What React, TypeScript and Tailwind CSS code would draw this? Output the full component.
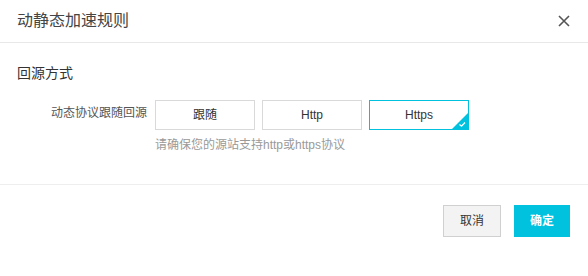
import { useState } from "react";

const font = { fontFamily: '"Liberation Sans", "Noto Sans CJK SC", sans-serif' };

export default function App() {
  const [mode, setMode] = useState("https");
  const opts = [
    { key: "follow", label: "跟随" },
    { key: "http", label: "Http" },
    { key: "https", label: "Https" },
  ];

  return (
    <div className="h-[276px] w-[588px] bg-white text-[#333]" style={font}>
      <div className="flex h-[43px] items-center justify-between border-b border-[#e8e8e8] pl-[17px] pr-[18px]">
        <h2 className="text-base leading-none text-[#444]">动静态加速规则</h2>
        <svg width="12" height="12" viewBox="0 0 12 12" className="text-[#555]">
          <path d="M1 1L11 11M11 1L1 11" stroke="currentColor" strokeWidth="1.6" />
        </svg>
      </div>

      <div className="h-[142px] border-b border-[#eee] px-[17px] pt-[20px]">
        <h3 className="text-sm leading-5 text-[#333]">回源方式</h3>
        <div className="mt-[17px] flex">
          <div className="w-[138px] pr-2 text-right text-xs leading-[26px] text-[#555]">
            动态协议跟随回源
          </div>
          <div>
            <div className="flex gap-[7px]">
              {opts.map((o) => {
                const on = mode === o.key;
                return (
                  <button
                    key={o.key}
                    onClick={() => setMode(o.key)}
                    className={
                      "relative h-[30px] w-[100px] overflow-hidden border text-xs text-[#333] " +
                      (on ? "border-[#00c1de]" : "border-[#d9d9d9]")
                    }
                  >
                    {o.label}
                    {on && (
                      <svg
                        width="16"
                        height="16"
                        viewBox="0 0 16 16"
                        className="absolute bottom-0 right-0"
                      >
                        <path d="M16 0V16H0Z" fill="#00c1de" />
                        <path
                          d="M7.5 11.5L9.5 13.2L13 9.5"
                          stroke="white"
                          strokeWidth="1.3"
                          fill="none"
                        />
                      </svg>
                    )}
                  </button>
                );
              })}
            </div>
            <p className="mt-[7px] text-xs leading-4 text-[#999]">
              请确保您的源站支持http或https协议
            </p>
          </div>
        </div>
      </div>

      <div className="flex justify-end gap-[13px] pr-[18px] pt-[20px]">
        <button className="h-[32px] w-[58px] border border-[#d0d0d0] bg-[#f3f3f3] text-xs text-[#333]">
          取消
        </button>
        <button className="h-[32px] w-[56px] bg-[#00c1de] text-xs font-bold text-white">
          确定
        </button>
      </div>
    </div>
  );
}
